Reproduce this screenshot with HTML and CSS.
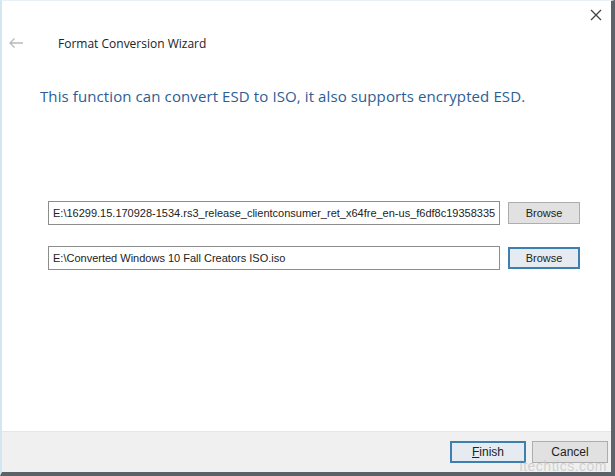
FILE: index.html
```html
<!DOCTYPE html>
<html>
<head>
<meta charset="utf-8">
<link rel="stylesheet" href="styles.css">
</head>
<body>
<div class="window">
  <div class="main">
    <div class="topbar">
      <span class="close">
        <svg width="12" height="12" viewBox="0 0 12 12"><path d="M1 1 L11 11 M11 1 L1 11" stroke="#444" stroke-width="1.3" fill="none"/></svg>
      </span>
    </div>
    <div class="titlerow">
      <svg class="back" width="16" height="12" viewBox="0 0 16 12"><path d="M15 6 H2 M6.5 1.5 L2 6 L6.5 10.5" stroke="#b9b9b9" stroke-width="1.3" fill="none"/></svg>
      <span class="title">Format Conversion Wizard</span>
    </div>
    <div class="heading">This function can convert ESD to ISO, it also supports encrypted ESD.</div>
    <div class="fields">
      <div class="row">
        <div class="input">E:\16299.15.170928-1534.rs3_release_clientconsumer_ret_x64fre_en-us_f6df8c19358335</div>
        <div class="btn">Browse</div>
      </div>
      <div class="row">
        <div class="input">E:\Converted Windows 10 Fall Creators ISO.iso</div>
        <div class="btn focus">Browse</div>
      </div>
    </div>
  </div>
  <div class="footer">
    <div class="btn wide focus"><u>F</u>inish</div>
    <div class="btn wide">Cancel</div>
    <span class="watermark">itechtics.com</span>
  </div>
</div>
</body>
</html>
```
FILE: styles.css
```css
html, body { margin: 0; padding: 0; background: #fff; }
body { width: 615px; height: 476px; overflow: hidden; font-family: "Open Sans", "Noto Sans", sans-serif; }
.window {
  box-sizing: border-box;
  width: 615px; height: 476px;
  display: flex; flex-direction: column;
  border-left: 2px solid #d3e6f2;
  border-right: 4px solid #5d646b;
  border-bottom: 4px solid #5a6168;
  border-top: 1px solid #e8f1f6;
  background: #fff;
}
.main { flex: 1; display: flex; flex-direction: column; }
.topbar { height: 27px; display: flex; justify-content: flex-end; align-items: center; padding-right: 9px; }
.close { display: flex; }
.titlerow { display: flex; align-items: center; height: 30px; padding-left: 6px; }
.back { margin-right: 34px; }
.title { font-size: 12px; color: #222; font-weight: 500; letter-spacing: 0; }
.heading { margin: 28px 0 0 38px; font-size: 15px; color: #2c5e95; letter-spacing: 0.1px; }
.fields { margin: 95px 0 0 46px; display: flex; flex-direction: column; gap: 21px; }
.row { display: flex; align-items: center; gap: 8px; }
.input {
  box-sizing: border-box;
  width: 452px; height: 24px;
  border: 1px solid #8d8d8d;
  font-family: "Liberation Sans", Arial, sans-serif;
  font-size: 11px; color: #222;
  padding: 0 4px;
  display: flex; align-items: center;
  white-space: nowrap; overflow: hidden;
}
.btn {
  box-sizing: border-box;
  width: 72px; height: 22px;
  border: 1px solid #adadad;
  background: #e1e1e1;
  font-family: "Liberation Sans", Arial, sans-serif;
  font-size: 11px; color: #222;
  display: flex; align-items: center; justify-content: center;
}
.btn.focus { border: 2px solid #3c7fb1; background: #e5ebf1; }
.footer {
  height: 41px; background: #f0f0f0;
  border-top: 1px solid #e6e6e6;
  display: flex; align-items: flex-start; justify-content: flex-end;
  gap: 6px; padding: 9px 3px 0 0;
  box-sizing: border-box;
  position: relative;
}
.btn.wide { width: 76px; font-size: 12px; }
.watermark {
  position: absolute; right: 4px; bottom: -1px;
  font-family: "Liberation Sans", Arial, sans-serif;
  font-size: 14px; line-height: 14px; color: rgba(200,200,200,0.8);
  letter-spacing: 0.5px;
}
```
